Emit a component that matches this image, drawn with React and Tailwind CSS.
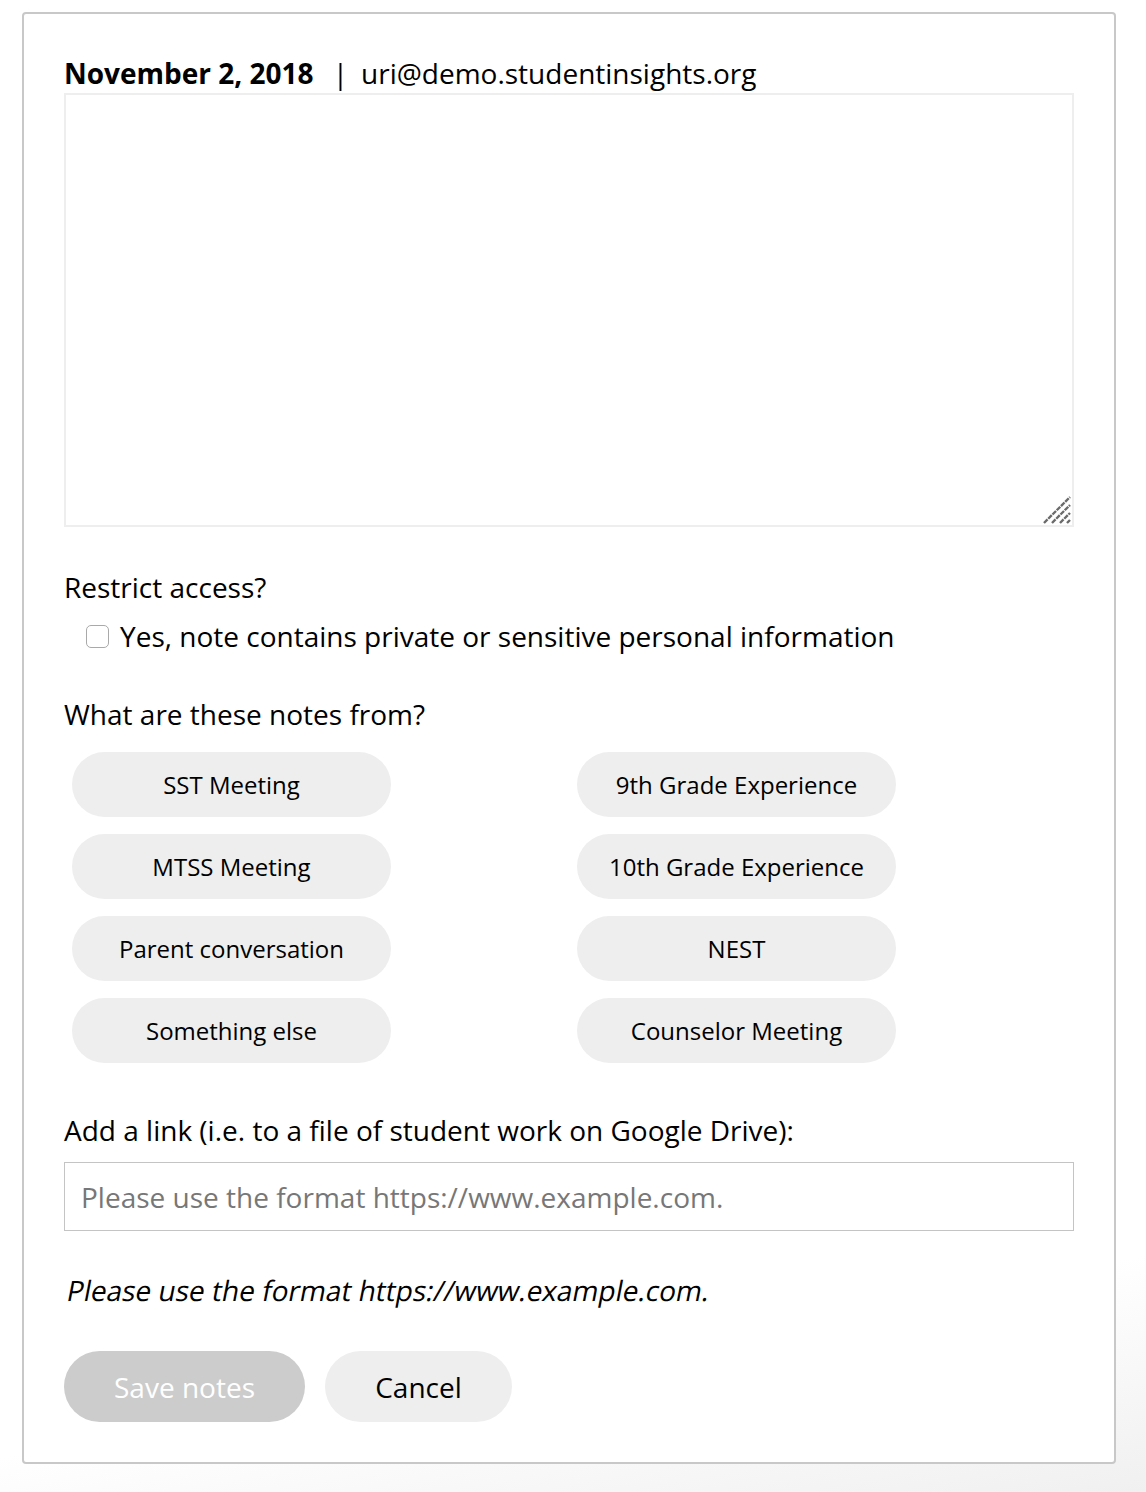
import React from "react";

const left = ["SST Meeting", "MTSS Meeting", "Parent conversation", "Something else"];
const right = ["9th Grade Experience", "10th Grade Experience", "NEST", "Counselor Meeting"];

function Pill({ children }) {
  return (
    <button
      type="button"
      className="ml-2 w-[319px] h-[65px] rounded-full bg-[#eeeeee] text-[24px] text-black leading-none flex items-center justify-center"
    >
      {children}
    </button>
  );
}

export default function App() {
  const rows = left.map((l, i) => [l, right[i]]);
  return (
    <div
      className="min-h-[1492px] w-[1146px] pt-3 pl-[22px] bg-[linear-gradient(170deg,#ffffff_86%,#f0f0f0_100%)]"
      style={{ fontFamily: '"Open Sans", "Noto Sans", sans-serif' }}
    >
      <div className="w-[1094px] h-[1452px] border-2 border-[#c8c8c8] rounded-[4px] bg-white px-10 pt-[39px]">
        <div className="flex items-center h-[40px] text-[28px] text-black leading-none">
          <span className="font-bold">November 2, 2018</span>
          <span className="ml-[19px]">|</span>
          <span className="ml-[13px]">uri@demo.studentinsights.org</span>
        </div>
        <div className="relative w-[1010px] h-[434px]">
          <textarea className="block w-[1010px] h-[434px] border-2 border-[#eeeeee] outline-none resize-none" />
          <svg
            className="absolute right-[3px] bottom-[3px] w-[28px] h-[28px] pointer-events-none"
            viewBox="0 0 28 28"
          >
            <g stroke="#6b6b6b" strokeWidth="2.4" strokeDasharray="5 1" fill="none">
              <line x1="1" y1="27" x2="27" y2="1" />
              <line x1="9" y1="27" x2="27" y2="9" />
              <line x1="17" y1="27" x2="27" y2="17" />
              <line x1="24" y1="27" x2="27" y2="24" />
            </g>
          </svg>
        </div>
        <div className="mt-[41px] text-[28px] leading-[38px] text-black">Restrict access?</div>
        <label className="mt-[11px] flex items-center h-[38px] text-[28px] text-black">
          <span className="ml-[22px] w-[23px] h-[23px] border border-[#a9a9a9] rounded-[5px] bg-white shrink-0" />
          <span className="ml-[11px]">Yes, note contains private or sensitive personal information</span>
        </label>
        <div className="mt-[40px] text-[28px] leading-[38px] text-black">What are these notes from?</div>
        <div className="mt-[19px] grid grid-cols-2 gap-y-[17px]">
          {rows.map(([a, b]) => (
            <React.Fragment key={a}>
              <Pill>{a}</Pill>
              <Pill>{b}</Pill>
            </React.Fragment>
          ))}
        </div>
        <div className="mt-[48px] text-[28px] leading-[38px] text-black">
          Add a link (i.e. to a file of student work on Google Drive):
        </div>
        <input
          className="mt-[13px] block w-[1010px] h-[69px] border border-[#c4c4c4] px-4 text-[28px] text-black placeholder:text-[#777777] outline-none"
          placeholder="Please use the format https://www.example.com."
        />
        <div className="mt-[40px] h-[38px] text-[28px] leading-[38px] text-black">
          <span className="inline-block origin-bottom-left -skew-x-[11deg]">
            Please use the format https://www.example.com.
          </span>
        </div>
        <div className="mt-[42px] flex gap-5">
          <button type="button" className="w-[241px] h-[71px] rounded-full bg-[#cccccc] text-white text-[28px]">
            Save notes
          </button>
          <button type="button" className="w-[187px] h-[71px] rounded-full bg-[#eeeeee] text-black text-[28px]">
            Cancel
          </button>
        </div>
      </div>
    </div>
  );
}
